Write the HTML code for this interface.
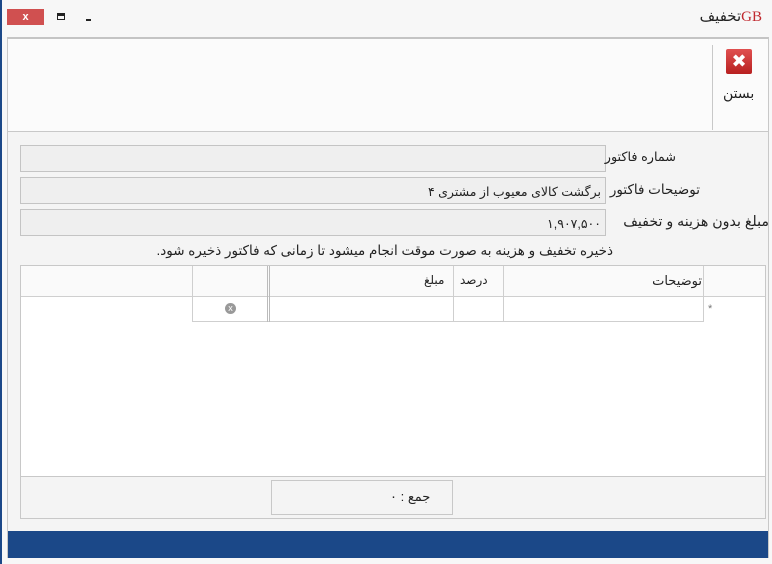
<!DOCTYPE html>
<html><head><meta charset="utf-8"><style>
*{box-sizing:border-box;margin:0;padding:0}
body{width:772px;height:564px;background:#f7f7f7;position:relative;overflow:hidden;font-family:"Liberation Sans","DejaVu Sans",sans-serif;font-size:13px;color:#222}
.a{position:absolute}
.inp{position:absolute;left:20px;width:586px;height:27px;background:#efefef;border:1px solid #c4c4c4;direction:rtl;padding:6px 4px;font-size:12.5px}
.lbl{position:absolute;right:96px;direction:rtl;font-size:13px;white-space:nowrap}
.l{position:absolute;background:#cfcfcf}
</style></head><body>
<div class="a" style="left:0;top:0;width:2px;height:564px;background:#1b4888"></div>
<div class="a" style="left:7px;top:9px;width:37px;height:16px;background:#d05050;color:#fff;font-size:11px;text-align:center;line-height:16px;font-weight:bold">x</div>
<div class="a" style="left:57px;top:13px;width:8px;height:7px;border:1px solid #222;border-top-width:3px"></div>
<div class="a" style="left:86px;top:19px;width:5px;height:2px;background:#222"></div>
<div class="a" style="right:10px;top:7px;direction:rtl;font-size:15px"><span style="color:#c0282e;font-family:'Liberation Serif',serif">GB</span>تخفیف</div>
<div class="a" style="left:7px;top:37px;width:762px;height:521px;background:#f4f4f4;border:1px solid #c8c8c8;border-top:2px solid #c4c4c4"></div>
<div class="a" style="left:8px;top:39px;width:760px;height:93px;background:#fbfbfb;border-bottom:1px solid #c8c8c8"></div>
<div class="a" style="left:712px;top:45px;width:1px;height:85px;background:#c8c8c8"></div>
<div class="a" style="left:726px;top:49px;width:26px;height:25px;background:linear-gradient(#e05050,#b82020);border-radius:2px;color:#fff;font-weight:bold;font-size:18px;text-align:center;line-height:25px">✖</div>
<div class="a" style="left:723px;top:85px;font-size:14px">بستن</div>
<div class="inp" style="top:145px"></div>
<div class="inp" style="top:177px">برگشت کالای معیوب از مشتری ۴</div>
<div class="inp" style="top:209px">۱,۹۰۷,۵۰۰</div>
<div class="lbl" style="top:149px;font-size:12.8px">شماره فاکتور</div>
<div class="lbl" style="top:182px;right:72px;font-size:13.5px">توضیحات فاکتور</div>
<div class="lbl" style="top:214px;right:3px;font-size:14.2px">مبلغ بدون هزینه و تخفیف</div>
<div class="a" style="right:159px;top:243px;direction:rtl;font-size:13.5px;white-space:nowrap">ذخیره تخفیف و هزینه به صورت موقت انجام میشود تا زمانی که فاکتور ذخیره شود.</div>
<div class="a" style="left:20px;top:265px;width:746px;height:254px;background:#fff;border:1px solid #c8c8c8"></div>
<div class="a" style="left:21px;top:266px;width:744px;height:30px;background:#fafafa"></div>
<div class="l" style="left:21px;top:296px;width:744px;height:1px"></div>
<div class="l" style="left:192px;top:321px;width:512px;height:1px"></div>
<div class="l" style="left:703px;top:266px;width:1px;height:56px"></div>
<div class="l" style="left:503px;top:266px;width:1px;height:56px"></div>
<div class="l" style="left:453px;top:266px;width:1px;height:56px"></div>
<div class="a" style="left:267px;top:266px;width:3px;height:56px;border-left:1px solid #bbb;border-right:1px solid #bbb"></div>
<div class="l" style="left:192px;top:266px;width:1px;height:56px"></div>
<div class="a" style="right:70px;top:273px;font-size:13px">توضیحات</div>
<div class="a" style="left:460px;top:273px;font-size:12px">درصد</div>
<div class="a" style="left:424px;top:273px;font-size:12px">مبلغ</div>
<div class="a" style="left:708px;top:303px;font-size:11px;color:#777">*</div>
<div class="a" style="left:225px;top:303px;width:11px;height:11px;border-radius:50%;background:#999;color:#fff;font-size:9px;text-align:center;line-height:11px">x</div>
<div class="a" style="left:21px;top:476px;width:744px;height:42px;background:#f4f4f4;border-top:1px solid #c8c8c8"></div>
<div class="a" style="left:271px;top:480px;width:182px;height:35px;border:1px solid #c8c8c8;background:#f4f4f4"></div>
<div class="a" style="left:390px;top:489px;direction:rtl;font-size:13px">جمع : ۰</div>
<div class="a" style="left:8px;top:531px;width:760px;height:27px;background:#1b4888"></div>
</body></html>
